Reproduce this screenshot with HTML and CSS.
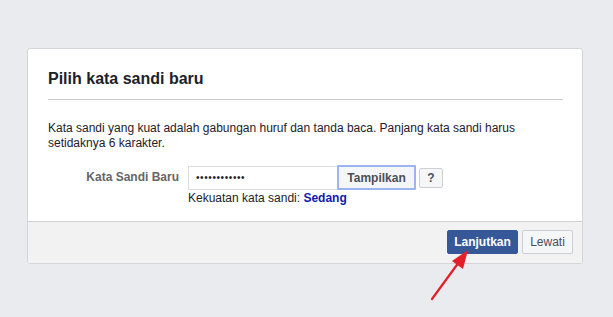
FILE: index.html
```html
<!DOCTYPE html>
<html>
<head>
<meta charset="utf-8">
<link rel="stylesheet" href="styles.css">
</head>
<body>
<div class="card">
  <div class="head">
    <h2 class="title">Pilih kata sandi baru</h2>
  </div>
  <div class="body">
    <p class="desc">Kata sandi yang kuat adalah gabungan huruf dan tanda baca. Panjang kata sandi harus setidaknya 6 karakter.</p>
    <div class="row">
      <label class="label">Kata Sandi Baru</label>
      <div class="field">
        <div class="controls">
          <div class="input">••••••••••••</div>
          <button class="btn show">Tampilkan</button>
          <button class="btn help">?</button>
        </div>
        <div class="strength">Kekuatan kata sandi: <b class="medium">Sedang</b></div>
      </div>
    </div>
  </div>
  <div class="foot">
    <button class="btn primary">Lanjutkan</button>
    <button class="btn skip">Lewati</button>
  </div>
</div>
<svg class="arrow" width="613" height="317" viewBox="0 0 613 317">
  <line x1="432" y1="299" x2="459" y2="262" stroke="#e3202a" stroke-width="2.2" stroke-linecap="round"/>
  <polygon points="468,250 463,269 452,261" fill="#e3202a"/>
</svg>
</body>
</html>
```
FILE: styles.css
```css
html, body {
  margin: 0;
  padding: 0;
}
body {
  background: #e9ebee;
  font-family: "Liberation Sans", Arial, sans-serif;
  color: #1d2129;
  width: 613px;
  height: 317px;
  overflow: hidden;
  position: relative;
}
.card {
  margin: 48px 0 0 27px;
  width: 554px;
  background: #fff;
  border: 1px solid #d3d5d9;
  border-radius: 3px;
  overflow: hidden;
}
.head {
  padding: 0 19px 0 20px;
}
.title {
  margin: 0;
  padding: 20px 0 11px;
  font-size: 16px;
  font-weight: bold;
  line-height: 19px;
  border-bottom: 1px solid #ccc;
  color: #1d2129;
}
.body {
  padding: 21px 20px 15px;
}
.desc {
  margin: 0;
  font-size: 12px;
  line-height: 15px;
  color: #1d2129;
}
.row {
  display: flex;
  margin-top: 14px;
}
.label {
  width: 140px;
  text-align: right;
  padding-right: 9px;
  box-sizing: border-box;
  font-size: 12px;
  font-weight: bold;
  color: #666;
  line-height: 24px;
  margin-top: 0;
}
.field {
  display: flex;
  flex-direction: column;
}
.controls {
  display: flex;
  align-items: center;
}
.input {
  width: 149px;
  height: 24px;
  box-sizing: border-box;
  border: 1px solid #ddd;
  border-right: none;
  padding: 0 4px 0 7px;
  font-size: 10px;
  line-height: 22px;
  letter-spacing: 0.6px;
  color: #1d2129;
}
.btn {
  font-family: "Liberation Sans", Arial, sans-serif;
  font-size: 12px;
  font-weight: bold;
  border-radius: 2px;
  border: 1px solid #ccd0d5;
  background: #f5f6f7;
  color: #4b4f56;
  padding: 0 8px;
  height: 24px;
  line-height: 22px;
  margin: 0;
  cursor: pointer;
}
.show {
  width: 79px;
  height: 25px;
  border: 2px solid #9cb4ef;
  border-radius: 1px;
  padding: 0;
}
.help {
  margin-left: 3px;
  width: 24px;
  height: 20px;
  line-height: 18px;
  padding: 0;
}
.strength {
  font-size: 12px;
  line-height: 15px;
  margin-top: 1px;
  color: #1d2129;
}
.medium {
  color: #0e1ab0;
}
.foot {
  background: #f2f2f2;
  border-top: 1px solid #d0d0d0;
  display: flex;
  justify-content: flex-end;
  gap: 4px;
  padding: 8px 9px 9px;
}
.primary {
  background: #365899;
  border-color: #365899;
  color: #fff;
  width: 71px;
  padding: 0;
}
.skip {
  font-weight: normal;
  color: #4b4f56;
  width: 51px;
  padding: 0;
  font-size: 12px;
}
.arrow {
  position: absolute;
  left: 0;
  top: 0;
}
```
